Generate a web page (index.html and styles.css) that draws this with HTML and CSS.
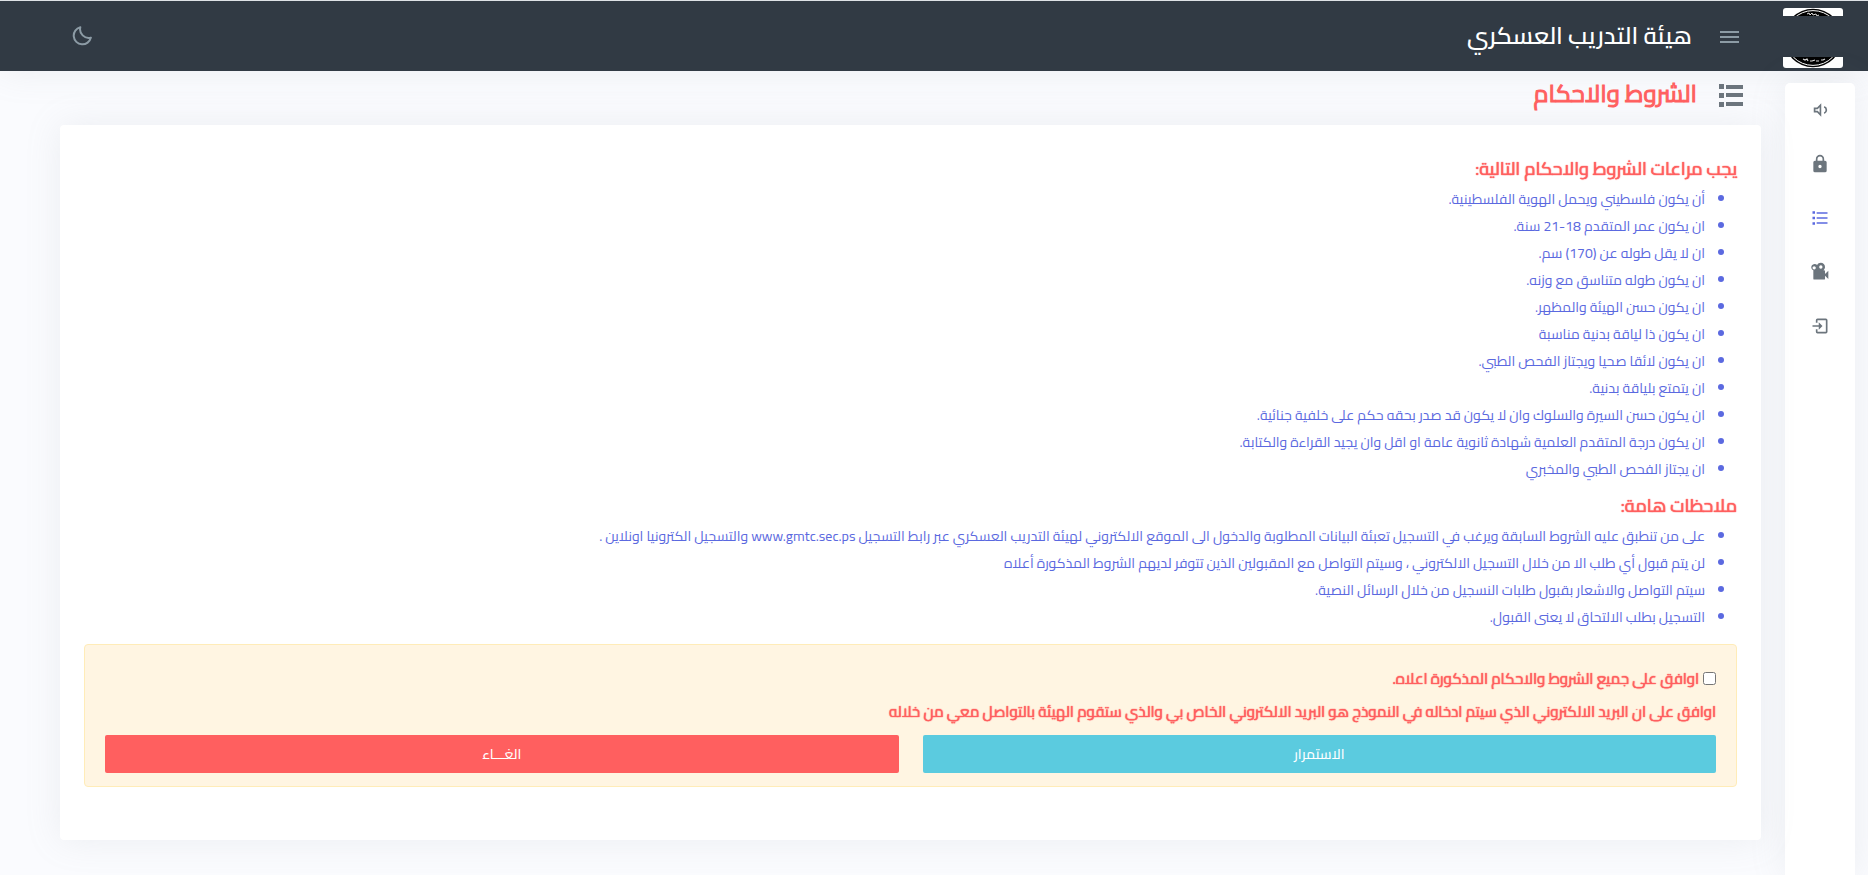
FILE: index.html
```html
<!DOCTYPE html>
<html lang="ar" dir="rtl">
<head>
<meta charset="utf-8">
<meta name="viewport" content="width=device-width, initial-scale=1">
<title>هيئة التدريب العسكري</title>
<link rel="stylesheet" href="styles.css">
</head>
<body>
<header class="topbar">
  <a class="brand" href="#" aria-label="الرئيسية">
    <svg class="brand-logo" viewBox="0 0 60 60" aria-hidden="true">
      <rect width="60" height="60" rx="3" fill="#fff"/>
      <circle cx="30" cy="30" r="29.2" fill="#000"/>
      <circle cx="30" cy="30" r="27.4" fill="none" stroke="#fff" stroke-width="1"/>
      <path d="M24 6l2-1 1 2 2-2 1 2 3-1 1 2 2-1" fill="none" stroke="#ddd" stroke-width="1"/>
      <path d="M20 51l2 1 2-1 1 2m2 0l2 0 3-1m1 1h3m2-1l2 0 2-1" fill="none" stroke="#ddd" stroke-width="1.2"/>
      <path class="brand-band" d="M0 8h60v41H0z"/>
    </svg>
  </a>
  <button class="icon-button menu-button" type="button" aria-label="القائمة">
    <svg viewBox="0 0 20 14" width="20" height="14" aria-hidden="true"><path d="M0 2h19M0 7h19M0 12h19" fill="none" stroke="currentColor" stroke-width="2"/></svg>
  </button>
  <h1 class="site-name">هيئة التدريب العسكري</h1>
  <button class="icon-button theme-button" type="button" aria-label="الوضع الليلي">
    <svg viewBox="0 0 20 20" width="20" height="20" aria-hidden="true"><path d="M8.3 1.200A8.700 8.700 0 1 0 18.900 11.600A8.700 8.700 0 0 1 8.300 1.200Z" fill="none" stroke="currentColor" stroke-width="2" stroke-linejoin="round"/></svg>
  </button>
</header>
<div class="layout">
  <nav class="sidebar" aria-label="القائمة الجانبية">
    <a class="side-link" href="#" aria-label="الاعلانات">
      <svg viewBox="0 0 24 24" aria-hidden="true"><path d="M3 9v6h4l5 5V4L7 9H3m7-.2v6.400L7.800 13H5v-2h2.800L10 8.800z" transform="translate(1.500 0)" fill="currentColor" fill-rule="evenodd"/><path d="M17 8c3.500 1.500 3.500 6.500 0 8" fill="none" stroke="currentColor" stroke-width="2"/></svg>
    </a>
    <a class="side-link" href="#" aria-label="تسجيل الدخول">
      <svg viewBox="0 0 24 24" aria-hidden="true"><path d="M12 17a2 2 0 0 0 2-2 2 2 0 0 0-2-2 2 2 0 0 0-2 2 2 2 0 0 0 2 2m6-9a2 2 0 0 1 2 2v10a2 2 0 0 1-2 2H6a2 2 0 0 1-2-2V10a2 2 0 0 1 2-2h1V6a5 5 0 0 1 10 0v2h1m-6-5a3 3 0 0 0-3 3v2h6V6a3 3 0 0 0-3-3z" fill="currentColor"/></svg>
    </a>
    <a class="side-link active" href="#" aria-label="الشروط والاحكام" aria-current="page">
      <svg viewBox="0 0 24 24" aria-hidden="true"><path d="M3 4h3v3H3zM8 5h13v2H8zM3 10.500h3v3H3zM8 11h13v2H8zM3 17h3v3H3zM8 17h13v2H8z" fill="currentColor"/></svg>
    </a>
    <a class="side-link" href="#" aria-label="الفيديو">
      <svg viewBox="0 0 24 24" aria-hidden="true"><path d="M18 14.500V11a1 1 0 0 0-1-1h-1c1.240-.94 2-2.410 2-4a5 5 0 0 0-5-5c-1.910 0-3.590 1.080-4.440 2.670A4 4 0 1 0 4 10v10a1 1 0 0 0 1 1h12a1 1 0 0 0 1-1v-3.500l4 4v-10l-4 4M13 4a2 2 0 1 1 0 4 2 2 0 0 1 0-4M5 5a2 2 0 1 1 0 4 2 2 0 0 1 0-4z" fill="currentColor" fill-rule="evenodd"/></svg>
    </a>
    <a class="side-link" href="#" aria-label="دخول">
      <svg viewBox="0 0 24 24" aria-hidden="true"><path d="M19 3H9a2 2 0 0 0-2 2v3h2V5h10v14H9v-3H7v3a2 2 0 0 0 2 2h10a2 2 0 0 0 2-2V5a2 2 0 0 0-2-2M10.500 16.500L15 12l-4.500-4.500V11H3v2h7.500v3.500z" fill="currentColor"/></svg>
    </a>
  </nav>
  <main class="content">
    <div class="page-title">
      <svg class="title-icon" viewBox="0 0 24 24" aria-hidden="true"><path d="M0 1h5v5H0zM7 2h17v4H7zM0 10h5v5H0zM7 10h17v4H7zM0 19h5v5H0zM7 19h17v4H7z" fill="currentColor"/></svg>
      <h2 class="title-text">الشروط والاحكام</h2>
    </div>
    <section class="card">
      <h3 class="section-title">يجب مراعات الشروط والاحكام التالية:</h3>
      <ul class="terms">
        <li>أن يكون فلسطيني ويحمل الهوية الفلسطينية.</li>
        <li>ان يكون عمر المتقدم 18-21 سنة.</li>
        <li>ان لا يقل طوله عن (170) سم.</li>
        <li>ان يكون طوله متناسق مع وزنه.</li>
        <li>ان يكون حسن الهيئة والمظهر.</li>
        <li>ان يكون ذا لياقة بدنية مناسبة</li>
        <li>ان يكون لائقا صحيا ويجتاز الفحص الطبي.</li>
        <li>ان يتمتع بلياقة بدنية.</li>
        <li>ان يكون حسن السيرة والسلوك وان لا يكون قد صدر بحقه حكم على خلفية جنائية.</li>
        <li>ان يكون درجة المتقدم العلمية شهادة ثانوية عامة او اقل وان يجيد القراءة والكتابة.</li>
        <li>ان يجتاز الفحص الطبي والمخبري</li>
      </ul>
      <h3 class="section-title">ملاحظات هامة:</h3>
      <ul class="terms">
        <li>على من تنطبق عليه الشروط السابقة ويرغب في التسجيل تعبئة البيانات المطلوبة والدخول الى الموقع الالكتروني لهيئة التدريب العسكري عبر رابط التسجيل www.gmtc.sec.ps والتسجيل الكترونيا اونلاين .</li>
        <li>لن يتم قبول أي طلب الا من خلال التسجيل الالكتروني ، وسيتم التواصل مع المقبولين الذين تتوفر لديهم الشروط المذكورة أعلاه</li>
        <li>سيتم التواصل والاشعار بقبول طلبات النسجيل من خلال الرسائل النصية.</li>
        <li>التسجيل بطلب الالتحاق لا يعنى القبول.</li>
      </ul>
      <form class="agreement">
        <div class="agree-row">
          <input class="agree-box" type="checkbox" id="agree">
          <label for="agree">اوافق على جميع الشروط والاحكام المذكورة اعلاه.</label>
        </div>
        <p class="agree-note">اوافق على ان البريد الالكتروني الذي سيتم ادخاله في النموذج هو البريد الالكتروني الخاص بي والذي ستقوم الهيئة بالتواصل معي من خلاله</p>
        <div class="actions">
          <button class="button button-continue" type="button">الاستمرار</button>
          <button class="button button-cancel" type="button">الغـــاء</button>
        </div>
      </form>
    </section>
  </main>
</div>
</body>
</html>
```
FILE: styles.css
```css
:root {
  --dark: #313a44;
  --red: #ff5f5f;
  --blue: #5b69e0;
  --gray: #6c757d;
  --shadow: 0 0 35px 0 rgba(154, 161, 171, 0.15);
}

* {
  box-sizing: border-box;
}

body {
  margin: 0;
  min-height: 100vh;
  display: flex;
  flex-direction: column;
  background: #fafbfe;
  font-family: "Cairo", "DejaVu Sans Condensed", "DejaVu Sans", sans-serif;
  font-size: 14px;
  line-height: 27px;
}

h1, h2, h3, p, ul {
  margin: 0;
}

.topbar {
  display: flex;
  align-items: center;
  height: 71px;
  padding: 0 25px 0 72px;
  border-top: 1px solid #dee2e6;
  background: var(--dark);
  box-shadow: var(--shadow);
}

.brand {
  display: flex;
  padding-top: 4px;
}

.brand-logo {
  width: 60px;
  height: 60px;
}

.brand-band {
  fill: var(--dark);
}

.icon-button {
  display: flex;
  padding: 0;
  border: 0;
  background: none;
  color: #8c9ba5;
}

.menu-button {
  margin: 2px 43px 0 28px;
}

.site-name {
  flex: 1;
  color: #fff;
  font-size: 24px;
  font-weight: 600;
  line-height: 40px;
}

.layout {
  flex: 1;
  display: flex;
  align-items: stretch;
  gap: 24px;
  padding: 0 13px 0 60px;
}

.sidebar {
  flex: none;
  display: flex;
  flex-direction: column;
  align-items: center;
  gap: 34px;
  width: 70px;
  margin-top: 12px;
  padding-top: 17px;
  border-radius: 5px 5px 0 0;
  background: #fff;
  box-shadow: var(--shadow);
}

.side-link {
  display: flex;
  color: var(--gray);
}

.side-link svg {
  width: 20px;
  height: 20px;
}

.side-link.active {
  color: var(--blue);
}

.content {
  flex: 1;
  min-width: 0;
  padding-bottom: 36px;
}

.page-title {
  display: flex;
  align-items: center;
  gap: 22px;
  height: 54px;
  padding: 0 18px 6px 0;
}

.title-icon {
  width: 24px;
  height: 24px;
  color: var(--gray);
}

.title-text {
  padding-bottom: 2px;
  color: var(--red);
  font-size: 24px;
  font-weight: 400;
  line-height: 40px;
  -webkit-text-stroke: 1px;
}

.card {
  padding: 29px 24px 53px;
  border-radius: 4px;
  background: #fff;
  box-shadow: var(--shadow);
}

.section-title {
  padding-bottom: 2px;
  color: var(--red);
  font-size: 18px;
  font-weight: 400;
  line-height: 30px;
}

.terms {
  margin-bottom: 8px;
  padding: 0 32px 0 0;
  color: var(--blue);
}

.section-title,
.agree-row,
.agree-note {
  text-shadow: 0 0 1px var(--red), 0 0 1px var(--red);
}

.agreement {
  margin-top: 13px;
  padding: 20px;
  padding-bottom: 13px;
  border: 1px solid #ffecb8;
  border-radius: 4px;
  background: #fff5e2;
  color: var(--red);
  font-size: 15px;
}

.agree-row {
  display: flex;
  align-items: center;
  gap: 4px;
  margin-bottom: 6px;
}

.agree-box {
  width: 13px;
  height: 13px;
  margin: 0;
}

.agree-note {
  margin-bottom: 10px;
}

.actions {
  display: grid;
  grid-template-columns: 1fr 1fr;
  gap: 24px;
}

.button {
  height: 38px;
  border: 0;
  border-radius: 2px;
  color: #fff;
  font: inherit;
  font-size: 14px;
  font-weight: 500;
}

.button-continue {
  background: #5bcbdf;
}

.button-cancel {
  background: var(--red);
}
```
